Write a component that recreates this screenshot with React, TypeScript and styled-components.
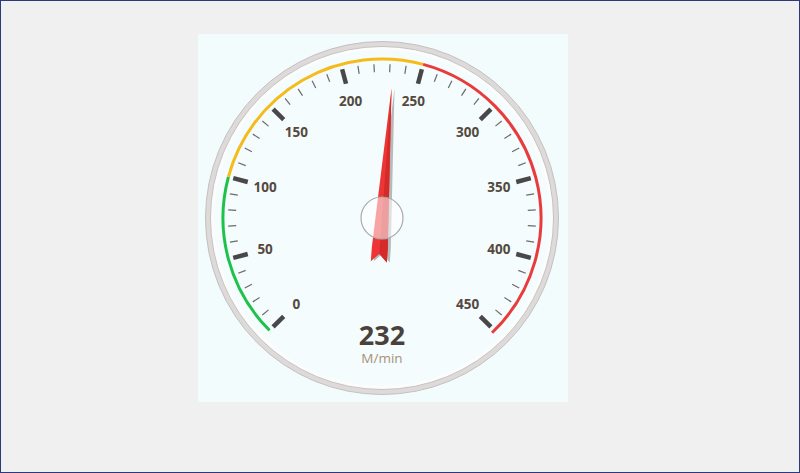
import React from 'react';
import styled, { createGlobalStyle } from 'styled-components';

const Global = createGlobalStyle`
  html, body { margin: 0; padding: 0; }
  body { font-family: "Open Sans", "Noto Sans", sans-serif; }
`;

const Frame = styled.div`
  box-sizing: border-box;
  width: 800px;
  height: 473px;
  background: #f0f0f0;
  border: 1px solid #2b3a7a;
  padding: 33px 0 0 197px;
`;

const Panel = styled.div`
  width: 370px;
  height: 368px;
  background: #f3fcfd;
`;

const CX = 184;
const CY = 184;
const A0 = -135;
const PER = 270 / 450;

const pt = (deg: number, r: number) => {
  const a = (deg * Math.PI) / 180;
  return [CX + r * Math.sin(a), CY - r * Math.cos(a)];
};

const arc = (v1: number, v2: number, r: number) => {
  const [x1, y1] = pt(A0 + v1 * PER, r);
  const [x2, y2] = pt(A0 + v2 * PER, r);
  const large = (v2 - v1) * PER > 180 ? 1 : 0;
  return `M${x1} ${y1} A${r} ${r} 0 ${large} 1 ${x2} ${y2}`;
};

const Gauge = ({ value }: { value: number }) => {
  const ticks = [];
  for (let v = 0; v <= 450; v += 10) {
    const major = v % 50 === 0;
    const d = A0 + v * PER;
    const [x1, y1] = pt(d, 154);
    const [x2, y2] = pt(d, major ? 139 : 146);
    ticks.push(
      <line key={v} x1={x1} y1={y1} x2={x2} y2={y2} stroke={major ? '#484848' : '#6a6a6a'} strokeWidth={major ? 4.5 : 1.2} />
    );
    if (major) {
      const [lx, ly] = pt(d, 121);
      ticks.push(
        <text key={'l' + v} x={lx} y={ly + 5} textAnchor="middle" fontSize="13.5" fontWeight="700" fill="#54493f" fontFamily="Open Sans, sans-serif">
          {v}
        </text>
      );
    }
  }
  const nd = A0 + value * PER;
  const needle = 'M0 -130 L8 30 L8 44 L0 36 L-8 44 L-8 30 Z';
  return (
    <svg width="370" height="368" viewBox="0 0 370 368">
      <circle cx={CX} cy={CY} r={174} fill="#fbfdfd" stroke="#dedada" strokeWidth="5" />
      <circle cx={CX} cy={CY} r={176.5} fill="none" stroke="#c4c0c0" strokeWidth="1" />
      <circle cx={CX} cy={CY} r={171.5} fill="none" stroke="#c6c2c2" strokeWidth="1" />
      <circle cx={CX} cy={CY} r={168} fill="#f4fcfd" />
      <path d={arc(0, 100, 159)} stroke="#1ec24b" strokeWidth="3" fill="none" />
      <path d={arc(100, 250, 159)} stroke="#f5bb1a" strokeWidth="3" fill="none" />
      <path d={arc(250, 452, 159)} stroke="#e83c3c" strokeWidth="3" fill="none" />
      {ticks}
      <text x={CX} y={311} textAnchor="middle" fontSize="27" fontWeight="700" fill="#4a423a" fontFamily="Open Sans, sans-serif">
        {value}
      </text>
      <text x={CX} y={329} textAnchor="middle" fontSize="13.5" fill="#a8907a" fontFamily="Open Sans, sans-serif">
        M/min
      </text>
      <g transform={`translate(${CX + 3} ${CY}) rotate(${nd})`}>
        <path d={needle} fill="#9c9c9c" opacity="0.7" />
      </g>
      <g transform={`translate(${CX} ${CY}) rotate(${nd})`}>
        <path d={needle} fill="#ee3535" />
        <path d="M0 -130 L8 30 L8 44 L0 36 Z" fill="#d42a2a" />
      </g>
      <circle cx={CX} cy={CY} r={21} fill="#ffffff" fillOpacity="0.55" stroke="#aaa" strokeWidth="1.2" />
    </svg>
  );
};

export default function App() {
  return (
    <>
      <Global />
      <Frame>
        <Panel>
          <Gauge value={232} />
        </Panel>
      </Frame>
    </>
  );
}
